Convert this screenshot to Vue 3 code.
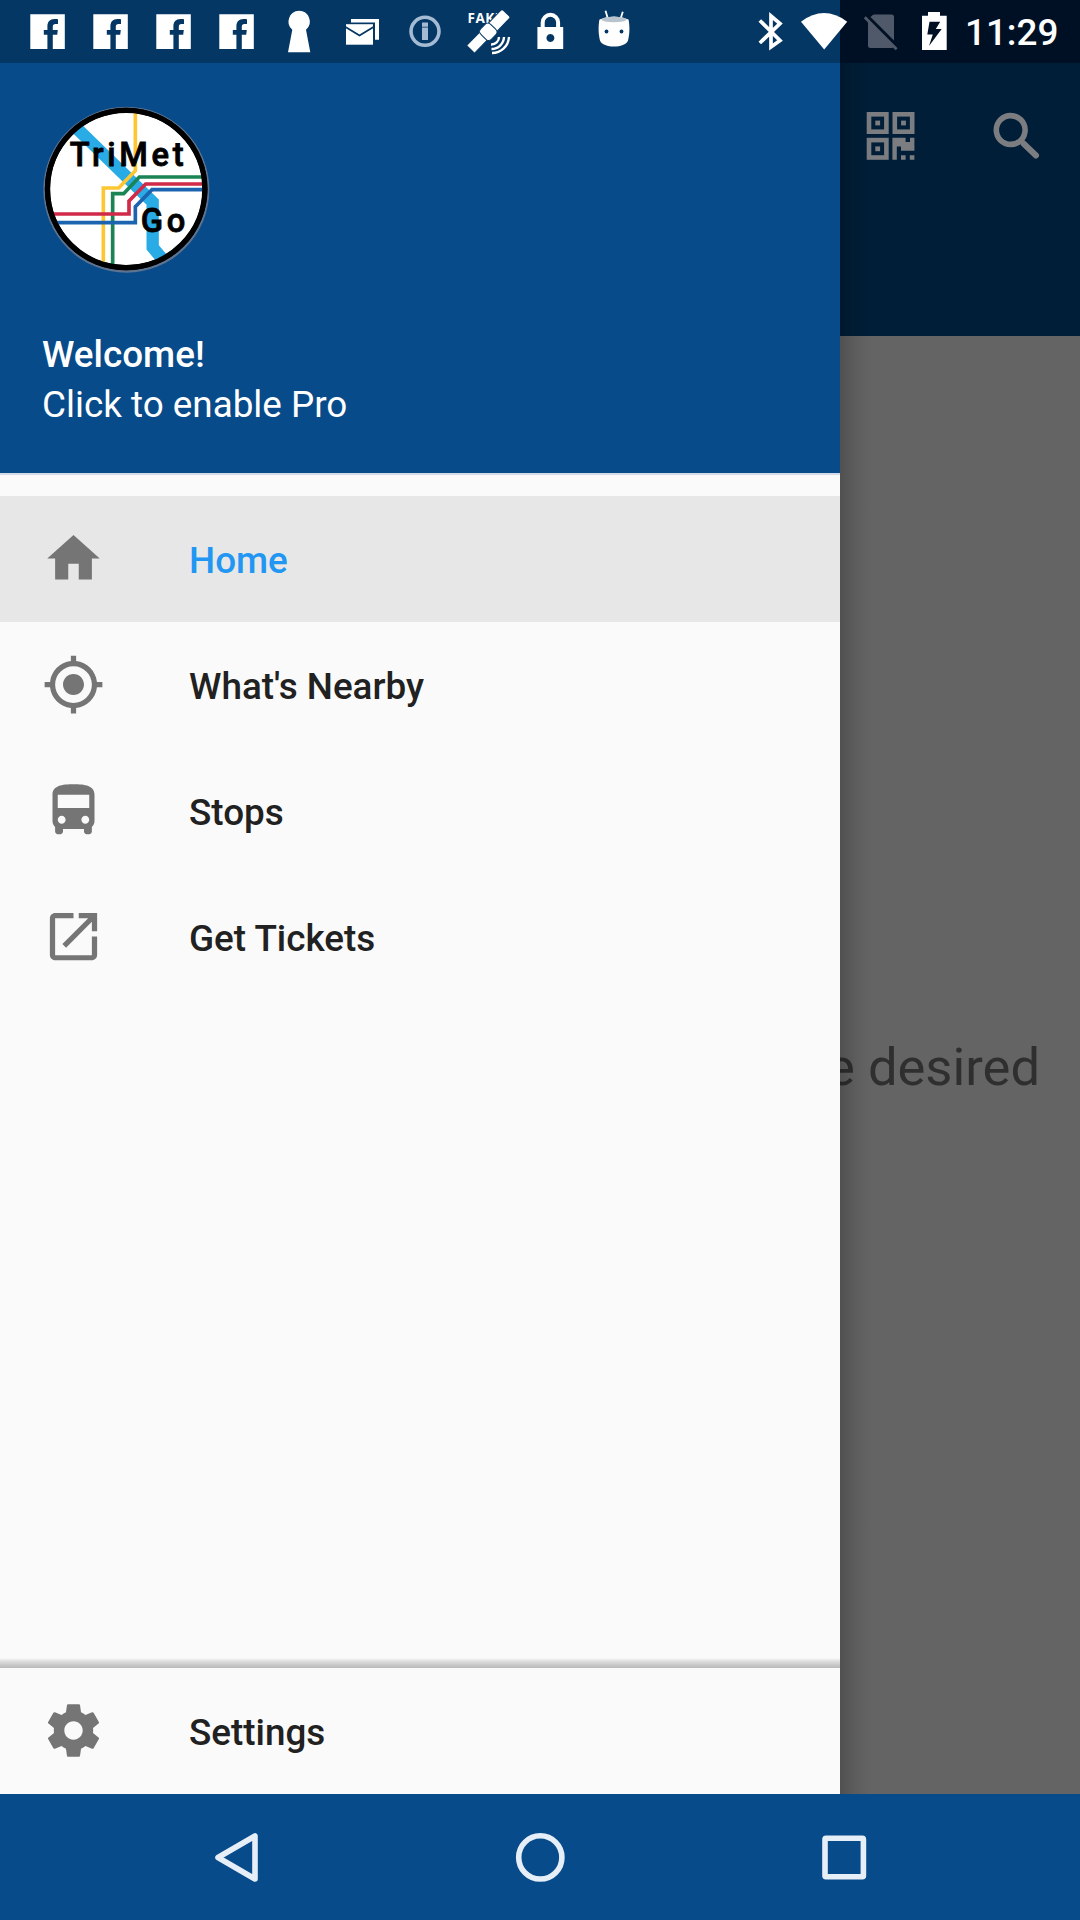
<script setup>
const menu = [
  {
    label: 'Home',
    active: true,
    path: 'M10 20v-6h4v6h5v-8h3L12 3 2 12h3v8z',
  },
  {
    label: "What's Nearby",
    path: 'M12 8c-2.21 0-4 1.79-4 4s1.79 4 4 4 4-1.79 4-4-1.79-4-4-4zm8.94 3c-.46-4.17-3.77-7.48-7.94-7.94V1h-2v2.06C6.83 3.52 3.52 6.83 3.06 11H1v2h2.06c.46 4.17 3.77 7.48 7.94 7.94V23h2v-2.06c4.17-.46 7.48-3.77 7.94-7.94H23v-2h-2.06zM12 19c-3.87 0-7-3.13-7-7s3.13-7 7-7 7 3.13 7 7-3.13 7-7 7z',
  },
  {
    label: 'Stops',
    path: 'M4 16c0 .88.39 1.67 1 2.22V20c0 .55.45 1 1 1h1c.55 0 1-.45 1-1v-1h8v1c0 .55.45 1 1 1h1c.55 0 1-.45 1-1v-1.78c.61-.55 1-1.34 1-2.22V6c0-3.5-3.58-4-8-4s-8 .5-8 4v10zm3.5 1c-.83 0-1.5-.67-1.5-1.5S6.67 14 7.5 14s1.5.67 1.5 1.5S8.33 17 7.5 17zm9 0c-.83 0-1.5-.67-1.5-1.5s.67-1.5 1.5-1.5 1.5.67 1.5 1.5-.67 1.5-1.5 1.5zm1.500-6H6V6h12v5z',
  },
  {
    label: 'Get Tickets',
    path: 'M19 19.1H5V5h7V3H5c-1.11 0-2 .9-2 2v14c0 1.1.89 2 2 2h14c1.1 0 2-.9 2-2v-7h-2v7.1zM14 3v2h3.59l-9.83 9.83 1.41 1.41L19 6.41V10h2V3h-7z',
  },
]
const settingsPath =
  'M19.43 12.98c.04-.32.07-.64.07-.98s-.03-.66-.07-.98l2.11-1.65c.19-.15.24-.42.12-.64l-2-3.46c-.12-.22-.39-.3-.61-.22l-2.49 1c-.52-.4-1.08-.73-1.69-.98l-.38-2.65C14.46 2.18 14.25 2 14 2h-4c-.25 0-.46.18-.49.42l-.38 2.65c-.61.25-1.17.59-1.69.98l-2.49-1c-.23-.09-.49 0-.61.22l-2 3.46c-.13.22-.07.49.12.64l2.11 1.65c-.04.32-.07.65-.07.98s.03.66.07.98l-2.11 1.65c-.19.15-.24.42-.12.64l2 3.46c.12.22.39.3.61.22l2.49-1c.52.4 1.08.73 1.69.98l.38 2.65c.03.24.24.42.49.42h4c.25 0 .46-.18.49-.42l.38-2.65c.61-.25 1.17-.59 1.69-.98l2.49 1c.23.09.49 0 .61-.22l2-3.46c.12-.22.07-.49-.12-.64l-2.11-1.65zM12 15.5c-1.93 0-3.5-1.57-3.5-3.5s1.57-3.5 3.5-3.5 3.5 1.57 3.5 3.5-1.57 3.5-3.5 3.5z'
</script>

<template>
  <div class="screen">
    <div class="body">
      <aside class="drawer">
        <header class="account">
          <svg class="logo" viewBox="0 0 600 600">
            <defs>
              <clipPath id="disc"><circle cx="288" cy="298" r="232" /></clipPath>
            </defs>
            <circle cx="289" cy="299" r="249" fill="#5d7390" />
            <circle cx="288.500" cy="297" r="244" fill="#000" />
            <circle cx="289" cy="297" r="229" fill="#fff" />
            <g clip-path="url(#disc)" fill="none">
              <path d="M130 105 L368 336 V472 L408 520" stroke="#29abe5" stroke-width="37" />
              <path d="M316 60 V242 L266 294 H220 V540" stroke="#fdc633" stroke-width="11" />
              <path d="M530 261 H328 L281 311 H248 V540" stroke="#1a8455" stroke-width="11" />
              <path d="M530 282 H347 L297 333 V372 H50" stroke="#d02a48" stroke-width="11" />
              <path d="M530 299 H366 L316 350 V398 H50" stroke="#1c64b0" stroke-width="11" />
            </g>
            <circle cx="288.500" cy="297" r="236" fill="none" stroke="#000" stroke-width="16" />
            <g class="logo-text">
              <text x="119" y="227" textLength="342">TriMet</text>
              <text x="332" y="425" textLength="134">Go</text>
            </g>
          </svg>
          <div class="welcome">Welcome!</div>
          <div class="pro">Click to enable Pro</div>
        </header>
        <nav class="menu">
          <div v-for="m in menu" :key="m.label" class="row" :class="{ active: m.active }">
            <svg class="icon" viewBox="0 0 24 24"><path :d="m.path" /></svg>
            <span>{{ m.label }}</span>
          </div>
        </nav>
        <div class="footer-shadow"></div>
        <div class="row">
          <svg class="icon" viewBox="0 0 24 24"><path :d="settingsPath" /></svg>
          <span>Settings</span>
        </div>
      </aside>

      <main class="content">
        <div class="appbar">
          <svg width="240" height="126" viewBox="0 0 240 126">
            <g fill="none" stroke="#7b7d80" stroke-width="4.6">
              <rect x="29" y="51.3" width="17.4" height="17.4" />
              <rect x="54.8" y="51.3" width="17.4" height="17.4" />
              <rect x="29" y="77.1" width="17.4" height="17.4" />
            </g>
            <g fill="#7b7d80">
              <rect x="35.3" y="57.6" width="4.8" height="4.8" />
              <rect x="61.1" y="57.6" width="4.8" height="4.8" />
              <rect x="35.3" y="83.4" width="4.8" height="4.8" />
              <path d="M52.4 74.7H65.6V79H70V74.7H74.4V87.7H61V83.4H56.8V96.8H52.4z" />
              <path d="M61 92.2h4.6v4.6H61zM69.8 92.2h4.6v4.6h-4.6z" />
            </g>
            <g fill="none" stroke="#7b7d80">
              <circle cx="170.7" cy="67" r="14.4" stroke-width="5.6" />
              <path d="M183.5 80.5L196 92.500" stroke-width="6" stroke-linecap="round" />
            </g>
          </svg>
        </div>
        <div class="hint"><span>e desired</span></div>
        <div class="edge"></div>
      </main>
    </div>

    <div class="navbar">
      <svg viewBox="0 0 304 126"><path d="M171 42V85L134 63.5z" /></svg>
      <svg viewBox="0 0 304 126"><circle cx="152.3" cy="63.4" r="21.6" /></svg>
      <svg viewBox="0 0 304 126"><rect x="133" y="44.3" width="38.4" height="38.4" rx="1" /></svg>
    </div>

    <div class="status">
      <svg v-for="n in 4" :key="n" class="note" viewBox="0 0 63 63">
        <path fill="#fff" d="M14.3 14.2H48.8V49H36.8V34.8H41.2L41.8 30H36.8V27C36.8 24.8 37.6 24 39.6 24H42V19.2C41 19 39.8 19 38.5 19C33.8 19 31.4 21.9 31.4 26.5V30H27.8V34.8H31.4V49H14.3z" />
      </svg>
      <svg class="note" viewBox="0 0 63 63">
        <path fill="#fff" d="M31 10.8a10.8 10.8 0 0 1 7 19L42.3 52.3H20L24.3 29.8A10.8 10.8 0 0 1 31 10.8z" />
      </svg>
      <svg class="note" viewBox="0 0 63 63">
        <path fill="#fff" d="M20 19H48V39.7H44V22.5H20z" />
        <path fill="#fff" d="M15 24.2H42V44.7H15z" />
        <path fill="none" stroke="#043764" stroke-width="1.8" d="M14.5 27L28.5 35.5L42.5 27" />
      </svg>
      <svg class="note" viewBox="0 0 63 63">
        <circle cx="31" cy="31.3" r="14" fill="none" stroke="#a5bbd3" stroke-width="3.6" />
        <path fill="#a5bbd3" d="M28 22.5h6v4.2h-6zM28 27.500h6v12.500h-6z" />
      </svg>
      <svg class="note" viewBox="0 0 63 63">
        <text x="10.5" y="22.7" class="fake">FAKE</text>
        <g fill="#fff" stroke="#043764" stroke-width="1" transform="translate(31.300 31.800) rotate(-46)">
          <rect x="5" y="-6" width="21" height="12" rx="2" />
          <rect x="-25" y="-6" width="20" height="11" />
          <rect x="-7" y="-7.500" width="14" height="15" rx="4" />
        </g>
        <path fill="none" stroke="#fff" stroke-width="2.4" d="M42 37a7.500 7.500 0 0 1-8 7.500M47 37A12.500 12.500 0 0 1 34.500 49M52 37A17 17 0 0 1 35 53" />
      </svg>
      <svg class="note" viewBox="0 0 63 63">
        <path fill="none" stroke="#fff" stroke-width="4" d="M22.700 28V22.500a7.700 7.700 0 0 1 15.400 0V28" />
        <path fill="#fff" fill-rule="evenodd" d="M17.400 27H43.200V49H17.400zM30.400 34a4 4 0 1 0 .01 0z" />
      </svg>
      <svg class="note" viewBox="0 0 63 63">
        <path stroke="#fff" stroke-width="1.8" d="M22.500 10.800L24.700 18M39.800 11.800L37.800 18" />
        <path fill="#fff" d="M16.500 19.500Q31 13.500 45.500 19.500C47 26 46.500 35 45 40.500C42 48.500 20 48.500 17 40.500C15.500 35 15 26 16.500 19.500z" />
        <ellipse cx="31" cy="19.500" rx="12.500" ry="2.800" fill="#b9c3ce" />
        <circle cx="23.500" cy="31.500" r="1.900" fill="#043764" />
        <circle cx="38.500" cy="31.500" r="1.900" fill="#043764" />
      </svg>

      <div class="system">
        <svg width="220" height="63" viewBox="740 0 220 63">
          <path fill="none" stroke="#fff" stroke-width="3.700" d="M759.800 20.500L780 40.500L771 47V16L780 23.500L759.800 43" />
          <path fill="#fff" d="M801 21.700Q824 4.500 847.200 21.700L824.200 49.500z" />
          <path fill="#50596a" d="M870.500 17L872.500 15.200Q873.200 14.600 874.500 14.600H891.500Q894 14.600 894 17.100V40.500zM868 20.500L893.500 46.500Q892.800 48 891.500 48H870.500Q868 48 868 45.500z" />
          <path stroke="#50596a" stroke-width="2.800" d="M864.800 17.200L896.600 49.200" />
          <path fill="#fff" fill-rule="evenodd" d="M928 12H940V15.700H946.700V50H922V15.700H928zM929.500 21.700L927.300 34.500H932.800L929 46L941.700 29H935.800L940.200 21.700z" />
        </svg>
        <span class="clock">11:29</span>
      </div>
    </div>
  </div>
</template>

<style>
body {
  margin: 0;
  background: #fafafa;
}
</style>

<style scoped>
.screen {
  position: relative;
  width: 1080px;
  height: 1920px;
  overflow: hidden;
  display: flex;
  flex-direction: column;
  font-family: Roboto, "Noto Sans", sans-serif;
  font-size: 36.85px;
}
.screen svg {
  display: block;
  flex: none;
}
.body {
  display: flex;
  height: 1794px;
}
.drawer {
  width: 840px;
  display: flex;
  flex-direction: column;
  background: #fafafa;
}
.account {
  box-sizing: border-box;
  height: 475px;
  padding: 90px 42px 0;
  background: #084b8a;
  background-clip: padding-box;
  border-bottom: 2px solid #d3dae8;
  color: #fff;
  line-height: 49px;
}
.logo {
  width: 200px;
  height: 200px;
  margin-left: -12px;
}
.logo-text {
  font-size: 98px;
  font-weight: 500;
  stroke: #000;
  stroke-width: 2.5px;
}
.welcome {
  margin-top: 40px;
  font-weight: 500;
}
.pro {
  margin-top: 1px;
}
.menu {
  flex: 1;
  padding-top: 21px;
}
.row {
  height: 126px;
  display: flex;
  align-items: center;
  padding-left: 42px;
  color: #212121;
  font-weight: 500;
}
.row span {
  padding-top: 2px;
}
.row.active {
  background: #e7e7e7;
  color: #2196f3;
}
.icon {
  width: 63px;
  height: 63px;
  margin: -1px 84px 0 0;
  fill: #757575;
}
.footer-shadow {
  height: 10px;
  background: linear-gradient(#fafafa, #dcdcdc 35%, #b8b8b8);
}
.content {
  position: relative;
  width: 240px;
  display: flex;
  flex-direction: column;
  overflow: hidden;
  background: #646464;
}
.appbar {
  height: 273px;
  padding-top: 63px;
  background: #001e38;
}
.hint {
  display: flex;
  justify-content: flex-end;
  padding: 700px 40px 0 0;
  font-size: 52.5px;
  line-height: 62px;
  white-space: nowrap;
  color: #2f2f2f;
}
.edge {
  position: absolute;
  inset: 0 auto 0 0;
  width: 32px;
  background: linear-gradient(90deg, rgba(0, 0, 0, 0.2), rgba(0, 0, 0, 0.07) 50%, transparent);
}
.navbar {
  height: 126px;
  display: flex;
  justify-content: center;
  background: #084b8a;
}
.navbar svg {
  width: 304px;
  height: 126px;
  fill: none;
  stroke: #e6eef8;
  stroke-width: 5.6;
  stroke-linejoin: round;
}
.status {
  position: absolute;
  top: 0;
  left: 0;
  box-sizing: border-box;
  width: 1080px;
  height: 63px;
  padding-left: 16px;
  display: flex;
  background: linear-gradient(90deg, #043764 840px, #001024 840px);
}
.note {
  width: 63px;
  height: 63px;
}
.fake {
  font-family: "Open Sans", sans-serif;
  font-size: 13.5px;
  font-weight: 700;
  letter-spacing: 0.5px;
  fill: #fff;
}
.system {
  margin-left: auto;
  width: 340px;
  display: flex;
  align-items: center;
}
.clock {
  margin-left: 5px;
  padding-top: 2px;
  color: #fff;
  font-weight: 500;
}
</style>
